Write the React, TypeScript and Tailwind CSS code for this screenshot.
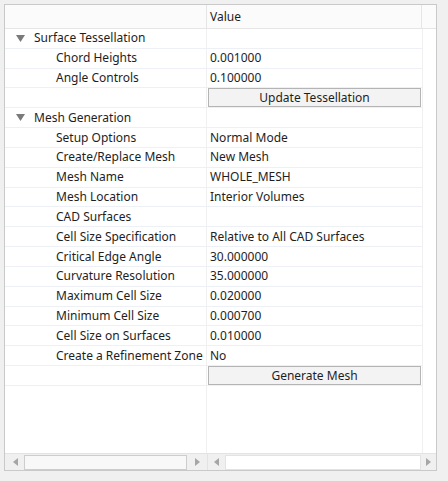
import React from "react";

type Row =
	| { kind: "group"; label: string }
	| { kind: "prop"; label: string; value: string }
	| { kind: "button"; label: string };

const rows: Row[] = [
	{ kind: "group", label: "Surface Tessellation" },
	{ kind: "prop", label: "Chord Heights", value: "0.001000" },
	{ kind: "prop", label: "Angle Controls", value: "0.100000" },
	{ kind: "button", label: "Update Tessellation" },
	{ kind: "group", label: "Mesh Generation" },
	{ kind: "prop", label: "Setup Options", value: "Normal Mode" },
	{ kind: "prop", label: "Create/Replace Mesh", value: "New Mesh" },
	{ kind: "prop", label: "Mesh Name", value: "WHOLE_MESH" },
	{ kind: "prop", label: "Mesh Location", value: "Interior Volumes" },
	{ kind: "prop", label: "CAD Surfaces", value: "" },
	{ kind: "prop", label: "Cell Size Specification", value: "Relative to All CAD Surfaces" },
	{ kind: "prop", label: "Critical Edge Angle", value: "30.000000" },
	{ kind: "prop", label: "Curvature Resolution", value: "35.000000" },
	{ kind: "prop", label: "Maximum Cell Size", value: "0.020000" },
	{ kind: "prop", label: "Minimum Cell Size", value: "0.000700" },
	{ kind: "prop", label: "Cell Size on Surfaces", value: "0.010000" },
	{ kind: "prop", label: "Create a Refinement Zone", value: "No" },
	{ kind: "button", label: "Generate Mesh" },
];

function Caret() {
	return (
		<svg width="9" height="7" viewBox="0 0 9 7" className="shrink-0">
			<polygon points="0,0 9,0 4.5,7" fill="#7a7a7a" />
		</svg>
	);
}

function Arrow({ dir }: { dir: "left" | "right" }) {
	return (
		<svg width="5" height="8" viewBox="0 0 5 8">
			{dir === "left" ? (
				<polygon points="5,0 5,8 0,4" fill="#a6a6a6" />
			) : (
				<polygon points="0,0 0,8 5,4" fill="#a6a6a6" />
			)}
		</svg>
	);
}

function PropRow({ row }: { row: Row }) {
	return (
		<div className="flex h-[19.83px] shrink-0 border-b border-[#edf1f6]">
			<div className="w-[202px] shrink-0 flex items-center border-r border-[#f0f0f0] overflow-hidden whitespace-nowrap">
				{row.kind === "group" && (
					<div className="flex items-center pl-[11px] gap-[9px]">
						<Caret />
						<span>{row.label}</span>
					</div>
				)}
				{row.kind === "prop" && <span className="pl-[51px]">{row.label}</span>}
			</div>
			<div className="w-[215px] shrink-0 flex items-center whitespace-nowrap overflow-hidden">
				{row.kind === "prop" && <span className="pl-[3px]">{row.value}</span>}
				{row.kind === "button" && (
					<div className="ml-[1px] w-[213px] h-[19px] flex items-center justify-center bg-[#f3f3f3] border border-[#b4b4b4]">
						{row.label}
					</div>
				)}
			</div>
		</div>
	);
}

export default function App() {
	return (
		<div
			className="relative w-[448px] h-[481px] overflow-hidden bg-[#f0f0f0] text-[12px] text-[#1e1e1e] leading-[16px]"
			style={{ fontFamily: '"Noto Sans", "Open Sans", sans-serif' }}
		>
			<div className="ml-[4px] mt-[4px] w-[433px] h-[467px] flex flex-col bg-white border border-[#c9c9c9]">
				<div className="flex h-[24px] shrink-0 bg-[#fbfbfb] border-b border-[#e5e5e5]">
					<div className="w-[202px] shrink-0 border-r border-[#e5e5e5]" />
					<div className="w-[215px] shrink-0 border-r border-[#e5e5e5] flex items-center pl-[3px] pt-[1px]">
						Value
					</div>
					<div className="flex-1" />
				</div>
				<div className="flex-1 flex min-h-0">
					<div className="w-[418px] shrink-0 flex flex-col border-r border-[#f0f0f0]">
						{rows.map((r, i) => (
							<PropRow key={i} row={r} />
						))}
						<div className="flex-1 flex">
							<div className="w-[202px] border-r border-[#f0f0f0]" />
						</div>
					</div>
					<div className="flex-1" />
				</div>
				<div className="flex h-[17px] shrink-0 bg-[#f0f0f0] border-t border-[#e3e3e3]">
					<div className="w-[202px] shrink-0 flex items-center pl-[2px]">
						<div className="w-[17px] h-full flex items-center justify-center">
							<Arrow dir="left" />
						</div>
						<div className="w-[163px] h-[15px] bg-[#f8f8f8] border border-[#cdcdcd]" />
						<div className="flex-1 h-full flex items-center justify-center">
							<Arrow dir="right" />
						</div>
					</div>
					<div className="flex-1 flex items-center border-l border-[#e3e3e3]">
						<div className="w-[17px] h-full flex items-center justify-center">
							<Arrow dir="left" />
						</div>
						<div className="flex-1 h-[15px] bg-white border border-[#e3e3e3]" />
						<div className="w-[15px] h-full flex items-center justify-center">
							<Arrow dir="right" />
						</div>
					</div>
				</div>
			</div>
		</div>
	);
}
